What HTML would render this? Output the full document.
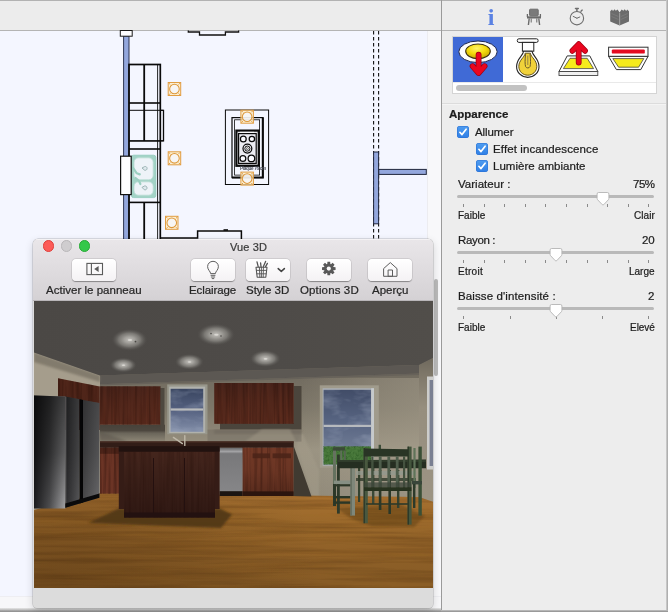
<!DOCTYPE html>
<html>
<head>
<meta charset="utf-8">
<title>Vue 3D</title>
<style>
html,body{margin:0;padding:0;}
body{width:668px;height:612px;overflow:hidden;position:relative;background:#ececec;font-family:"Liberation Sans",sans-serif;font-size:11px;color:#1a1a1a;}
.abs{position:absolute;}
#topbar{left:0;top:0;width:668px;height:30px;background:#ececec;border-top:1px solid #b2b2b2;box-sizing:border-box;}
#topline{left:0;top:30px;width:668px;height:1px;background:#b4b4b4;}
#plan{left:0;top:31px;width:427px;height:566px;background:#f4f6ff;}
#vscroll{left:427px;top:31px;width:14px;height:577px;background:#f8f8fa;border-left:1px solid #ececf0;box-sizing:border-box;}
#hscroll{left:0;top:596px;width:441px;height:12px;background:#f7f7f9;border-top:1px solid #eeeef2;box-sizing:border-box;}
#botline{left:0;top:608px;width:441px;height:4px;background:linear-gradient(#e4e4e4,#cfcfcf 30%,#a8a8a8 62%,#8a8a8a);}
#botline2{left:441px;top:609.6px;width:227px;height:2.4px;background:linear-gradient(#c4c4c4,#8c8c8c);}
#divider{left:441px;top:0;width:1px;height:610px;background:#9a9a9a;}
#panel{left:442px;top:31px;width:226px;height:581px;background:#ededed;}
#rightedge{left:666px;top:0;width:2px;height:612px;background:linear-gradient(90deg,#d2d2d2,#a4a4a4);}
.lbl{position:absolute;white-space:nowrap;line-height:12px;height:12px;will-change:transform;-webkit-font-smoothing:antialiased;-webkit-text-stroke:0.22px currentColor;}
.r{text-align:right;}
.cb{position:absolute;width:12px;height:12px;border-radius:3px;background:linear-gradient(#4f9df0,#2f7fe6);box-shadow:0 0 0 0.5px #2a6fd0 inset;}
.track{position:absolute;left:457px;width:197px;height:3px;border-radius:1.5px;background:#b9b9b9;}
.tick{position:absolute;width:1px;height:3.2px;background:#8a8a8a;}
.btn{position:absolute;top:259px;width:44px;height:22px;border-radius:4px;background:linear-gradient(#ffffff,#f4f2f4);box-shadow:0 0.5px 1px rgba(0,0,0,.35),0 0 0 0.5px rgba(0,0,0,.10);}
.tl{position:absolute;top:240.4px;width:11.6px;height:11.6px;border-radius:6px;box-sizing:border-box;}
.wl{position:absolute;white-space:nowrap;line-height:12px;height:12px;top:284px;color:#2a2a2a;font-size:11.3px;text-align:center;}
</style>
</head>
<body>
<div id="topbar" class="abs"></div>
<div id="topline" class="abs"></div>
<div id="plan" class="abs"></div>
<div id="vscroll" class="abs"></div>
<div id="hscroll" class="abs"></div>
<div id="panel" class="abs"></div>
<div id="rightedge" class="abs"></div>
<div id="divider" class="abs"></div>
<div id="botline" class="abs"></div>
<div id="botline2" class="abs"></div>

<!-- PLAN SVG -->
<svg class="abs" id="plansvg" style="left:0;top:0;will-change:transform" width="441" height="612" viewBox="0 0 441 612">
<defs>
  <g id="lt">
    <rect x="0.5" y="0.5" width="12.5" height="13" fill="#fdeec8" fill-opacity="0.75" stroke="#e19d42" stroke-width="1"/>
    <path d="M1,1 L2.6,2.6 M12.5,1 L10.9,2.6 M1,13 L2.6,11.4 M12.5,13 L10.9,11.4" stroke="#dc9434" stroke-width="0.9"/>
    <circle cx="6.75" cy="7" r="4.8" fill="#f3f6ff" fill-opacity="0.7" stroke="#de983a" stroke-width="1.05"/>
  </g>
</defs>
<!-- top shape -->
<path d="M188.3,30.5 V32 H199.5 V35 H225.4 V32 H238.6 V30.5" fill="none" stroke="#111" stroke-width="1.3"/>
<!-- left wall -->
<rect x="123.6" y="36" width="5.4" height="212" fill="#93a7dd" stroke="#2c3350" stroke-width="1"/>
<rect x="120.3" y="30.5" width="11.9" height="5.7" fill="#fdfdff" stroke="#1a1a1a" stroke-width="1"/>
<!-- cabinets -->
<g fill="none" stroke="#0a0a0a">
  <rect x="129" y="64.5" width="31.3" height="180" stroke-width="1.7"/>
  <path d="M144.2,64.5 V141 M144.2,202.5 V244" stroke-width="1.8"/>
  <path d="M157.6,64.5 V244" stroke-width="0.9"/>
  <path d="M129,103 H160" stroke-width="1.6"/>
  <path d="M129,110.3 H163.5 V140.8 H129" stroke-width="1"/>
  <path d="M160.3,110.3 H163.5 V140.8 H160.3" stroke-width="1.3"/>
  <path d="M129,141 H160" stroke-width="1.3"/>
  <path d="M129,149 H160" stroke-width="1.6"/>
  <path d="M129,202.4 H160" stroke-width="1.6"/>
  <path d="M160,238 H197.6 V231 H241.4 V244" stroke-width="1.5"/>
  <path d="M223.5,230 H228" stroke-width="1.6"/>
</g>
<!-- sink -->
<g>
  <rect x="131.4" y="155.2" width="24.4" height="42.4" rx="2.2" fill="#a3d3c6"/>
  <rect x="131.4" y="155.2" width="24.4" height="42.4" rx="2.2" fill="none" stroke="#8fc9ba" stroke-width="0.8"/>
  <rect x="134" y="157.8" width="19.2" height="22" rx="4.5" fill="#eef3f8" stroke="#b9dcd3" stroke-width="0.8"/>
  <rect x="134" y="181.8" width="19.2" height="13.4" rx="4.5" fill="#eef3f8" stroke="#b9dcd3" stroke-width="0.8"/>
  <path d="M133.2,168 l3.4,5.2 l3.2,1.2 M135.6,178 l3.2,2.6 l1.6,3.4" fill="none" stroke="#9ccfc1" stroke-width="2.2" stroke-linecap="round"/>
  <path d="M142,168 l2.6,-1.4 a1.9,1.9 0 1 1 0,3.6 Z" fill="#dfe9ee" stroke="#8aa7a6" stroke-width="0.8"/>
  <path d="M142,187.4 l2.4,-1.4 a2,2 0 1 1 0,3.8 Z" fill="#dfe9ee" stroke="#8aa7a6" stroke-width="0.8"/>
</g>
<!-- wall window -->
<rect x="120.6" y="156.2" width="10.6" height="38.4" fill="#fdfdff" stroke="#111" stroke-width="1.2"/>
<!-- lights -->
<use href="#lt" x="167.7" y="82"/>
<use href="#lt" x="167.7" y="151.3"/>
<use href="#lt" x="165" y="215.8"/>
<!-- island -->
<g fill="none" stroke="#0a0a0a">
  <rect x="225.4" y="110" width="43.2" height="74.5" stroke-width="1"/>
  <rect x="232" y="117.6" width="31" height="60" stroke-width="1.2"/>
  <path d="M262.8,117.6 V177.6 H232" stroke-width="2"/>
  <rect x="234.6" y="119.8" width="25" height="55.3" stroke-width="0.8"/>
  <rect x="236.4" y="130.6" width="22.4" height="35.2" stroke-width="2.2" fill="#e8e8ec"/>
  <rect x="238.6" y="133.6" width="17.6" height="29.8" stroke-width="1.2" fill="#ececf2"/>
  <path d="M240,132.3 H254" stroke-width="0.8" stroke="#fff"/>
</g>
<g fill="#fbfbff" stroke="#0a0a0a" stroke-width="1.25">
  <circle cx="243.3" cy="139" r="2.9"/>
  <circle cx="251.9" cy="139" r="2.7"/>
  <circle cx="247.4" cy="148.6" r="4.4"/>
  <circle cx="247.4" cy="148.6" r="2.6" fill="none" stroke-width="1"/>
  <circle cx="247.4" cy="148.6" r="1" fill="#fff" stroke-width="0.6"/>
  <circle cx="242.9" cy="158.5" r="2.9"/>
  <circle cx="251.4" cy="158.4" r="3.3"/>
</g>
<text x="240" y="169.6" font-family="Liberation Sans, sans-serif" font-size="4.6" font-weight="bold" fill="#4c505a" textLength="26">Plaque 76 cm</text>
<use href="#lt" x="240.4" y="109.7"/>
<use href="#lt" x="240.4" y="171.6"/>
<!-- right walls -->
<path d="M373.6,31 V244 M378.6,31 V244" fill="none" stroke="#111" stroke-width="1.1" stroke-dasharray="3.6 2.4"/>
<rect x="373.6" y="152" width="5" height="71.8" fill="#93a7dd" stroke="#20263c" stroke-width="1"/>
<rect x="378.8" y="169.4" width="47.5" height="5" fill="#93a7dd" stroke="#20263c" stroke-width="1"/>
</svg>
<div class="abs" style="left:434.2px;top:279px;width:4.2px;height:97px;border-radius:2.1px;background:#bababa;"></div>
<!-- tab icons -->
<div class="abs" style="left:484.2px;top:5px;width:14px;height:24px;font-family:'Liberation Serif',serif;font-weight:bold;font-size:24px;line-height:24px;color:#5b82e3;text-align:center;will-change:transform;">i</div>
<svg class="abs" style="left:524px;top:6px" width="20" height="22" viewBox="0 0 20 22">
  <g fill="none" stroke="#6a6a6a">
    <rect x="5.6" y="3.2" width="8.6" height="6.6" rx="0.8" fill="#7a7a7a" stroke-width="1"/>
    <path d="M3.4,8 V11 M16.4,8 V11" stroke-width="1.3"/>
    <path d="M3,11.4 H17" stroke-width="2.2"/>
    <path d="M5.2,12.5 L4.4,19 M14.8,12.5 L15.6,19" stroke-width="1.4"/>
    <path d="M7.2,12.5 V16.5 M12.8,12.5 V16.5" stroke-width="1"/>
  </g>
</svg>
<svg class="abs" style="left:566px;top:5px" width="22" height="22" viewBox="0 0 22 22">
  <g fill="none" stroke="#6e6e6e" stroke-linecap="round">
    <circle cx="10.9" cy="13.2" r="6.7" stroke-width="1.1"/>
    <path d="M9.5,3.6 H12.3 M10.9,3.8 V6.3" stroke-width="1.5"/>
    <path d="M15,6.2 L16.2,5.1" stroke-width="1.4"/>
    <path d="M10.9,13.2 L7.2,11.4 M10.9,13.2 L13.8,12" stroke-width="1"/>
  </g>
</svg>
<svg class="abs" style="left:608px;top:6px" width="24" height="22" viewBox="0 0 24 22">
  <path d="M2.2,5.2 L4,3.6 L5,5 L6.6,3.2 L7.8,4.8 L9.6,3.4 L11.6,6.4 L13.6,3.4 L15.4,4.8 L16.6,3.2 L18.2,5 L19.2,3.6 L21,5.2 V15.6 L11.6,19.4 L2.2,15.6 Z" fill="#6b6b6b"/>
  <path d="M11.6,7 V19" stroke="#9a9a9a" stroke-width="1.2"/>
  <path d="M3.6,7.5 L10.4,10.5 M3.6,10.5 L10.4,13.5 M19.6,7.5 L12.8,10.5 M19.6,10.5 L12.8,13.5" stroke="#7e7e7e" stroke-width="0.8"/>
</svg>
<!-- light chooser -->
<div class="abs" style="left:452px;top:36px;width:205px;height:58px;background:#fff;border:1px solid #d4d4d4;box-sizing:border-box;"></div>
<div class="abs" style="left:453px;top:37px;width:50px;height:45px;background:#406ad6;"></div>
<div class="abs" style="left:453px;top:82px;width:203px;height:1px;background:#e9e9e9;"></div>
<div class="abs" style="left:456px;top:85px;width:71px;height:6px;border-radius:3px;background:#c2c2c2;"></div>
<svg class="abs" style="left:452px;top:36px" width="205" height="48" viewBox="452 36 205 48">
  <defs>
    <radialGradient id="yg" cx="0.45" cy="0.3" r="0.8"><stop offset="0" stop-color="#fff36a"/><stop offset="0.45" stop-color="#f6dc0c"/><stop offset="1" stop-color="#b89a00"/></radialGradient>
  </defs>
  <!-- icon 1: recessed light -->
  <ellipse cx="478" cy="51.8" rx="19.2" ry="10.8" fill="#fdfdfd" stroke="#1b2550" stroke-width="1"/>
  <ellipse cx="478" cy="51.3" rx="12.3" ry="7.3" fill="url(#yg)" stroke="#3a2f10" stroke-width="1.1"/>
  <g fill="none" stroke-linecap="round" stroke-linejoin="round">
    <path d="M478.6,54.6 V71.5 M472.6,66.2 L478.6,73 L484.6,66.2" stroke="#9c0010" stroke-width="5.8"/>
    <path d="M478.6,54.6 V71.5 M472.6,66.2 L478.6,73 L484.6,66.2" stroke="#ea0620" stroke-width="4.4"/>
  </g>
  <!-- icon 2: bulb -->
  <rect x="517.3" y="38.8" width="20.8" height="3.6" rx="1.6" fill="#fff" stroke="#222" stroke-width="1"/>
  <rect x="522.4" y="42.4" width="11.4" height="8.8" fill="#fff" stroke="#222" stroke-width="1"/>
  <path d="M523.6,51.2 C523,56 516.6,58.6 516.6,66.4 C516.6,72.6 521.6,77.4 527.8,77.4 C534,77.4 539,72.6 539,66.4 C539,58.6 532.6,56 532,51.2 Z" fill="#fff" stroke="#222" stroke-width="1.1"/>
  <path d="M525.2,53.2 C524.6,57.4 518.8,60 518.8,66.4 C518.8,71.4 522.8,75.2 527.8,75.2 C532.8,75.2 536.8,71.4 536.8,66.4 C536.8,60 531,57.4 530.4,53.2 Z" fill="#f1d23a" stroke="#55440c" stroke-width="0.9"/>
  <path d="M525.6,54 C525,60 524.8,64 525.6,66.6 C526.4,68.4 529.2,68.4 530,66.6 C530.8,64 530.6,60 530,54" fill="none" stroke="#6a5a2a" stroke-width="1"/>
  <path d="M527.8,55.5 V65" stroke="#8a7a4a" stroke-width="0.9"/>
  <!-- icon 3: uplight -->
  <path d="M567.2,55.9 H589.8 L597.8,71.5 H559 Z" fill="#fff" stroke="#333" stroke-width="1" stroke-linejoin="round"/>
  <path d="M570,58.3 H587.2 L593.6,68.6 H563.4 Z" fill="#f6ea1c" stroke="#444" stroke-width="0.8" stroke-linejoin="round"/>
  <rect x="559" y="71.5" width="38.8" height="4" fill="#f0f0f0" stroke="#444" stroke-width="0.9"/>
  <g fill="none" stroke-linecap="round" stroke-linejoin="round">
    <path d="M578.7,62.6 V46 M572.4,50.8 L578.7,44.2 L585,50.8" stroke="#9c0010" stroke-width="5.8"/>
    <path d="M578.7,62.6 V46 M572.4,50.8 L578.7,44.2 L585,50.8" stroke="#ea0620" stroke-width="4.4"/>
  </g>
  <!-- icon 4: ceiling fixture -->
  <rect x="608.6" y="47.2" width="39.4" height="9.2" fill="#fff" stroke="#333" stroke-width="1"/>
  <rect x="611.8" y="49.4" width="33" height="4.2" rx="1.2" fill="#e40a20"/>
  <path d="M608.6,56.4 H648 L640.8,69.6 H616.4 Z" fill="#fff" stroke="#333" stroke-width="1" stroke-linejoin="round"/>
  <path d="M612.8,58.6 H643.8 L638.6,67.2 H618.6 Z" fill="#f6ea1c" stroke="#444" stroke-width="0.8" stroke-linejoin="round"/>
</svg>
<div class="abs" style="left:442px;top:103px;width:224px;height:1px;background:#dcdcdc;"></div>
<div class="abs" style="left:442px;top:104px;width:224px;height:1px;background:#f4f4f4;"></div>
<div class="lbl" style="left:448.8px;top:108.0px;font-size:11.5px;font-weight:bold;letter-spacing:-0.02px;color:#1c1c1c">Apparence</div>
<div class="lbl" style="left:474.6px;top:126.0px;font-size:11.5px;font-weight:normal;letter-spacing:-0.08px;color:#1c1c1c">Allumer</div>
<div class="lbl" style="left:492.6px;top:142.8px;font-size:11.5px;font-weight:normal;letter-spacing:0.11px;color:#1c1c1c">Effet incandescence</div>
<div class="lbl" style="left:492.6px;top:159.7px;font-size:11.5px;font-weight:normal;letter-spacing:0.03px;color:#1c1c1c">Lumière ambiante</div>
<div class="lbl" style="left:457.6px;top:178.0px;font-size:11.5px;font-weight:normal;letter-spacing:0.02px;color:#1c1c1c">Variateur :</div>
<div class="lbl" style="left:632.5px;top:178.0px;font-size:11.5px;font-weight:normal;letter-spacing:-0.48px;color:#1c1c1c">75%</div>
<div class="lbl" style="left:457.6px;top:209.8px;font-size:10px;font-weight:normal;letter-spacing:0.01px;color:#1c1c1c">Faible</div>
<div class="lbl" style="left:633.7px;top:209.8px;font-size:10px;font-weight:normal;letter-spacing:0.09px;color:#1c1c1c">Clair</div>
<div class="lbl" style="left:457.6px;top:234.0px;font-size:11.5px;font-weight:normal;letter-spacing:-0.35px;color:#1c1c1c">Rayon :</div>
<div class="lbl" style="left:641.9px;top:234.0px;font-size:11.5px;font-weight:normal;letter-spacing:-0.10px;color:#1c1c1c">20</div>
<div class="lbl" style="left:457.6px;top:265.8px;font-size:10px;font-weight:normal;letter-spacing:0.28px;color:#1c1c1c">Etroit</div>
<div class="lbl" style="left:629.0px;top:265.8px;font-size:10px;font-weight:normal;letter-spacing:0.00px;color:#1c1c1c">Large</div>
<div class="lbl" style="left:457.6px;top:290.0px;font-size:11.5px;font-weight:normal;letter-spacing:0.11px;color:#1c1c1c">Baisse d'intensité :</div>
<div class="lbl" style="left:648.2px;top:290.0px;font-size:11.5px;font-weight:normal;letter-spacing:-0.11px;color:#1c1c1c">2</div>
<div class="lbl" style="left:457.6px;top:321.8px;font-size:10px;font-weight:normal;letter-spacing:0.01px;color:#1c1c1c">Faible</div>
<div class="lbl" style="left:629.8px;top:321.8px;font-size:10px;font-weight:normal;letter-spacing:-0.04px;color:#1c1c1c">Elevé</div>
<div class="cb" style="left:457px;top:126px"><svg width="12" height="12" viewBox="0 0 12 12" style="position:absolute;left:0;top:0"><path d="M2.9,6.3 L5,8.6 L9.1,3.2" fill="none" stroke="#fff" stroke-width="1.7" stroke-linecap="round" stroke-linejoin="round"/></svg></div>
<div class="cb" style="left:475.5px;top:143px"><svg width="12" height="12" viewBox="0 0 12 12" style="position:absolute;left:0;top:0"><path d="M2.9,6.3 L5,8.6 L9.1,3.2" fill="none" stroke="#fff" stroke-width="1.7" stroke-linecap="round" stroke-linejoin="round"/></svg></div>
<div class="cb" style="left:475.5px;top:160px"><svg width="12" height="12" viewBox="0 0 12 12" style="position:absolute;left:0;top:0"><path d="M2.9,6.3 L5,8.6 L9.1,3.2" fill="none" stroke="#fff" stroke-width="1.7" stroke-linecap="round" stroke-linejoin="round"/></svg></div>
<div class="track" style="top:195px"></div>
<div class="tick" style="left:463.1px;top:203.6px"></div>
<div class="tick" style="left:483.7px;top:203.6px"></div>
<div class="tick" style="left:504.2px;top:203.6px"></div>
<div class="tick" style="left:524.8px;top:203.6px"></div>
<div class="tick" style="left:545.3px;top:203.6px"></div>
<div class="tick" style="left:565.9px;top:203.6px"></div>
<div class="tick" style="left:586.5px;top:203.6px"></div>
<div class="tick" style="left:607.0px;top:203.6px"></div>
<div class="tick" style="left:627.6px;top:203.6px"></div>
<div class="tick" style="left:648.1px;top:203.6px"></div>
<svg class="abs" style="left:594.5px;top:191px" width="16" height="17" viewBox="0 0 16 17"><path d="M3.6,1.5 H12.4 Q13.9,1.5 13.9,3 V7.4 Q13.9,8.2 13.3,8.8 L8.8,13.6 Q8,14.4 7.2,13.6 L2.7,8.8 Q2.1,8.2 2.1,7.4 V3 Q2.1,1.5 3.6,1.5 Z" fill="#fff" stroke="#b4b4b4" stroke-width="0.9"/></svg>
<div class="track" style="top:251px"></div>
<div class="tick" style="left:463.1px;top:259.6px"></div>
<div class="tick" style="left:483.7px;top:259.6px"></div>
<div class="tick" style="left:504.2px;top:259.6px"></div>
<div class="tick" style="left:524.8px;top:259.6px"></div>
<div class="tick" style="left:545.3px;top:259.6px"></div>
<div class="tick" style="left:565.9px;top:259.6px"></div>
<div class="tick" style="left:586.5px;top:259.6px"></div>
<div class="tick" style="left:607.0px;top:259.6px"></div>
<div class="tick" style="left:627.6px;top:259.6px"></div>
<div class="tick" style="left:648.1px;top:259.6px"></div>
<svg class="abs" style="left:548.3px;top:247px" width="16" height="17" viewBox="0 0 16 17"><path d="M3.6,1.5 H12.4 Q13.9,1.5 13.9,3 V7.4 Q13.9,8.2 13.3,8.8 L8.8,13.6 Q8,14.4 7.2,13.6 L2.7,8.8 Q2.1,8.2 2.1,7.4 V3 Q2.1,1.5 3.6,1.5 Z" fill="#fff" stroke="#b4b4b4" stroke-width="0.9"/></svg>
<div class="track" style="top:307px"></div>
<div class="tick" style="left:463.3px;top:315.6px"></div>
<div class="tick" style="left:509.6px;top:315.6px"></div>
<div class="tick" style="left:555.8px;top:315.6px"></div>
<div class="tick" style="left:602.0px;top:315.6px"></div>
<div class="tick" style="left:648.3px;top:315.6px"></div>
<svg class="abs" style="left:548.3px;top:303px" width="16" height="17" viewBox="0 0 16 17"><path d="M3.6,1.5 H12.4 Q13.9,1.5 13.9,3 V7.4 Q13.9,8.2 13.3,8.8 L8.8,13.6 Q8,14.4 7.2,13.6 L2.7,8.8 Q2.1,8.2 2.1,7.4 V3 Q2.1,1.5 3.6,1.5 Z" fill="#fff" stroke="#b4b4b4" stroke-width="0.9"/></svg>
<!-- 3D WINDOW -->
<div id="win" class="abs" style="left:33px;top:239px;width:400.4px;height:369px;border-radius:5px 5px 4px 4px;background:#dcdcdc;box-shadow:0 0 0 0.5px rgba(0,0,0,.22),0 3px 9px rgba(0,0,0,.16);overflow:hidden;">
  <div class="abs" style="left:0;top:0;width:401px;height:62px;background:linear-gradient(#e9e6e9,#d4d1d4);border-top:1px solid #f4f2f4;box-sizing:border-box;"></div>
  <div class="abs" style="left:0;top:61px;width:401px;height:1px;background:#b9b6b9;"></div>
</div>
<div class="tl" style="left:42.7px;background:#fc5b57;border:0.5px solid #df3d39;"></div>
<div class="tl" style="left:60.5px;background:#cfcdcf;border:0.5px solid #b9b7b9;"></div>
<div class="tl" style="left:78.6px;background:#34c84a;border:0.5px solid #27aa35;"></div>
<div class="lbl" style="left:229.6px;top:241.0px;font-size:11px;letter-spacing:0.12px;color:#3a3a3a">Vue 3D</div>
<div class="lbl" style="left:46.0px;top:284.2px;font-size:11.5px;letter-spacing:0.02px;color:#262626">Activer le panneau</div>
<div class="lbl" style="left:189.3px;top:283.8px;font-size:11.5px;letter-spacing:-0.09px;color:#262626">Eclairage</div>
<div class="lbl" style="left:246.2px;top:283.8px;font-size:11.5px;letter-spacing:-0.03px;color:#262626">Style 3D</div>
<div class="lbl" style="left:299.7px;top:283.8px;font-size:11.5px;letter-spacing:0.13px;color:#262626">Options 3D</div>
<div class="lbl" style="left:371.7px;top:283.8px;font-size:11.5px;letter-spacing:-0.01px;color:#262626">Aperçu</div>
<div class="btn" style="left:72px"></div>
<div class="btn" style="left:191px"></div>
<div class="btn" style="left:246.3px"></div>
<div class="btn" style="left:307px"></div>
<div class="btn" style="left:368px"></div>
<svg class="abs" style="left:72px;top:259px" width="44" height="22" viewBox="72 259 44 22">
  <rect x="86.9" y="263.4" width="15.6" height="11.2" fill="none" stroke="#5a5a5a" stroke-width="1.1"/>
  <path d="M91.4,263.4 V274.6" stroke="#5a5a5a" stroke-width="1.1"/>
  <path d="M98.6,266 V272 L94.2,269 Z" fill="#5a5a5a"/>
</svg>
<svg class="abs" style="left:191px;top:259px" width="44" height="22" viewBox="191 259 44 22">
  <path d="M210.6,273.6 C210.6,271.4 207.6,270 207.6,266.6 C207.6,263.6 210,261.3 213,261.3 C216,261.3 218.4,263.6 218.4,266.6 C218.4,270 215.4,271.4 215.4,273.6 Z" fill="none" stroke="#5e5e5e" stroke-width="1" stroke-linejoin="round"/>
  <path d="M210.6,275.3 H215.4 M210.9,277 H215.1 M211.8,278.6 H214.2" stroke="#5e5e5e" stroke-width="1"/>
</svg>
<svg class="abs" style="left:246px;top:259px" width="44" height="22" viewBox="246 259 44 22">
  <g fill="none" stroke="#555" stroke-linecap="round">
    <path d="M256,267.2 H267 L265.8,277.2 H257.2 Z" stroke-width="1.1" stroke-linejoin="round"/>
    <path d="M256.6,270.4 H266.4 M257,273.8 H266 M259.4,267.2 L259.8,277.2 M263.4,267.2 L263.2,277.2 M261.4,267.2 V277.2" stroke-width="0.9"/>
    <path d="M258.2,266.6 L257,261.8 M261,266.6 L260.6,263 M263.4,266.6 L265.6,261.4 M265.6,266.6 L267.4,263.4" stroke-width="1.3"/>
    <path d="M278.2,268.6 L281.3,271.4 L284.4,268.6" stroke-width="1.5" stroke="#444" stroke-linejoin="round"/>
  </g>
</svg>
<svg class="abs" style="left:307px;top:259px" width="44" height="22" viewBox="307 259 44 22">
  <path d="M335.56,267.23 L335.56,269.97 L333.45,270.14 L333.18,270.80 L334.55,272.41 L332.61,274.35 L331.00,272.98 L330.34,273.25 L330.17,275.36 L327.43,275.36 L327.26,273.25 L326.60,272.98 L324.99,274.35 L323.05,272.41 L324.42,270.80 L324.15,270.14 L322.04,269.97 L322.04,267.23 L324.15,267.06 L324.42,266.40 L323.05,264.79 L324.99,262.85 L326.60,264.22 L327.26,263.95 L327.43,261.84 L330.17,261.84 L330.34,263.95 L331.00,264.22 L332.61,262.85 L334.55,264.79 L333.18,266.40 L333.45,267.06 Z" fill="#585858"/>
  <circle cx="328.8" cy="268.6" r="2.1" fill="#f8f7f8"/>
</svg>
<svg class="abs" style="left:368px;top:259px" width="44" height="22" viewBox="368 259 44 22">
  <g fill="none" stroke="#5c5c5c" stroke-linejoin="round">
    <path d="M383.6,268.6 L390.3,262.6 L397,268.6 V276.3 H383.6 Z" stroke-width="1"/>
    <rect x="388.1" y="270" width="4.4" height="6.3" stroke-width="1"/>
  </g>
</svg>
<!-- 3D SCENE -->
<svg class="abs" id="scene" style="left:34px;top:301px" width="398.8" height="287" viewBox="34 301 398.8 287" preserveAspectRatio="none">
<defs>
  <linearGradient id="gceil" x1="0" y1="0" x2="1" y2="0"><stop offset="0" stop-color="#4b4845"/><stop offset="0.6" stop-color="#4e4b48"/><stop offset="1" stop-color="#514e4a"/></linearGradient>
  <linearGradient id="gback" gradientUnits="userSpaceOnUse" x1="0" y1="378" x2="0" y2="497"><stop offset="0" stop-color="#726c60"/><stop offset="0.25" stop-color="#7d7769"/><stop offset="0.45" stop-color="#8d8676"/><stop offset="0.6" stop-color="#9a9382"/><stop offset="1" stop-color="#8f8878"/></linearGradient>
  <linearGradient id="gfloor" gradientUnits="userSpaceOnUse" x1="0" y1="492" x2="0" y2="588"><stop offset="0" stop-color="#a97232"/><stop offset="0.3" stop-color="#9b692b"/><stop offset="0.6" stop-color="#906128"/><stop offset="1" stop-color="#855a25"/></linearGradient>
  <linearGradient id="gfside" gradientUnits="userSpaceOnUse" x1="34" y1="0" x2="65" y2="0"><stop offset="0" stop-color="#1c1c1e"/><stop offset="0.5" stop-color="#4e4e50"/><stop offset="1" stop-color="#a2a2a4"/></linearGradient>
  <linearGradient id="gfd1" gradientUnits="userSpaceOnUse" x1="65" y1="0" x2="80" y2="0"><stop offset="0" stop-color="#2a2a2c"/><stop offset="1" stop-color="#5a5a5c"/></linearGradient>
  <linearGradient id="gfd2" gradientUnits="userSpaceOnUse" x1="83" y1="0" x2="99.5" y2="0"><stop offset="0" stop-color="#4a4a4c"/><stop offset="1" stop-color="#6c6c6e"/></linearGradient>
  <linearGradient id="gfv" gradientUnits="userSpaceOnUse" x1="0" y1="396" x2="0" y2="510"><stop offset="0" stop-color="#000" stop-opacity="0.62"/><stop offset="0.5" stop-color="#000" stop-opacity="0.42"/><stop offset="0.8" stop-color="#000" stop-opacity="0.18"/><stop offset="1" stop-color="#000" stop-opacity="0"/></linearGradient>
  <linearGradient id="gsky" gradientUnits="userSpaceOnUse" x1="0" y1="388" x2="0" y2="446"><stop offset="0" stop-color="#404b66"/><stop offset="0.55" stop-color="#566380"/><stop offset="1" stop-color="#6c7892"/></linearGradient>
  <linearGradient id="gsky2" gradientUnits="userSpaceOnUse" x1="0" y1="388" x2="0" y2="432"><stop offset="0" stop-color="#38445f"/><stop offset="0.5" stop-color="#556180"/><stop offset="1" stop-color="#838fa9"/></linearGradient>
  <linearGradient id="gdw" gradientUnits="userSpaceOnUse" x1="0" y1="448" x2="0" y2="492"><stop offset="0" stop-color="#6a6a6c"/><stop offset="0.08" stop-color="#a2a2a4"/><stop offset="0.13" stop-color="#78787a"/><stop offset="1" stop-color="#868688"/></linearGradient>
  <radialGradient id="glight"><stop offset="0" stop-color="#c2c0bb" stop-opacity="1"/><stop offset="0.3" stop-color="#a5a39e" stop-opacity="0.95"/><stop offset="0.6" stop-color="#8a8883" stop-opacity="0.75"/><stop offset="0.82" stop-color="#6a6864" stop-opacity="0.4"/><stop offset="1" stop-color="#504e4a" stop-opacity="0"/></radialGradient>
  <linearGradient id="gsoff" gradientUnits="userSpaceOnUse" x1="0" y1="366" x2="0" y2="388"><stop offset="0" stop-color="#514e4a"/><stop offset="0.5" stop-color="#57534e"/><stop offset="0.75" stop-color="#635e54"/><stop offset="1" stop-color="#6b655a"/></linearGradient>
  <linearGradient id="gcabU" gradientUnits="userSpaceOnUse" x1="0" y1="383" x2="0" y2="425"><stop offset="0" stop-color="#48231a"/><stop offset="0.5" stop-color="#52271b"/><stop offset="1" stop-color="#582a1d"/></linearGradient>
  <linearGradient id="gwr" gradientUnits="userSpaceOnUse" x1="300" y1="0" x2="419" y2="0"><stop offset="0" stop-color="#a8a08e" stop-opacity="0"/><stop offset="0.6" stop-color="#a8a08e" stop-opacity="0.35"/><stop offset="1" stop-color="#a8a08e" stop-opacity="0.5"/></linearGradient>
  <linearGradient id="grw" gradientUnits="userSpaceOnUse" x1="0" y1="358" x2="0" y2="500"><stop offset="0" stop-color="#6f695d"/><stop offset="0.12" stop-color="#7f786a"/><stop offset="0.35" stop-color="#968e7e"/><stop offset="1" stop-color="#9c9484"/></linearGradient>
  <linearGradient id="gunder" gradientUnits="userSpaceOnUse" x1="0" y1="424.7" x2="0" y2="441.5"><stop offset="0" stop-color="#47423a"/><stop offset="0.35" stop-color="#4d473f"/><stop offset="0.5" stop-color="#6a655a"/><stop offset="1" stop-color="#8d8676"/></linearGradient>
  <radialGradient id="gvig" gradientUnits="userSpaceOnUse" cx="60" cy="600" r="260"><stop offset="0" stop-color="#2a1604" stop-opacity="0.3"/><stop offset="0.6" stop-color="#2a1604" stop-opacity="0.12"/><stop offset="1" stop-color="#2a1604" stop-opacity="0"/></radialGradient>
  <linearGradient id="gbase" gradientUnits="userSpaceOnUse" x1="0" y1="448" x2="0" y2="496"><stop offset="0" stop-color="#2a120b" stop-opacity="0.05"/><stop offset="0.5" stop-color="#2a120b" stop-opacity="0.15"/><stop offset="1" stop-color="#2a120b" stop-opacity="0.4"/></linearGradient>
  <linearGradient id="gisl" gradientUnits="userSpaceOnUse" x1="0" y1="450" x2="0" y2="518"><stop offset="0" stop-color="#45261d"/><stop offset="0.4" stop-color="#3b2019"/><stop offset="1" stop-color="#2f1813"/></linearGradient>
  <filter id="fwood" x="0" y="0" width="100%" height="100%" color-interpolation-filters="sRGB">
    <feTurbulence type="fractalNoise" baseFrequency="0.008 0.22" numOctaves="3" seed="7"/>
    <feColorMatrix type="matrix" values="0 0 0 0 0.26  0 0 0 0 0.15  0 0 0 0 0.05  1.6 0 0 0 -0.62"/>
  </filter>
  <filter id="fwood2" x="0" y="0" width="100%" height="100%" color-interpolation-filters="sRGB">
    <feTurbulence type="fractalNoise" baseFrequency="0.006 0.12" numOctaves="2" seed="11"/>
    <feColorMatrix type="matrix" values="0 0 0 0 0.78  0 0 0 0 0.52  0 0 0 0 0.18  1.5 0 0 0 -0.68"/>
  </filter>
  <filter id="fgrain" x="0" y="0" width="100%" height="100%" color-interpolation-filters="sRGB">
    <feTurbulence type="fractalNoise" baseFrequency="0.35 0.012" numOctaves="3" seed="5"/>
    <feColorMatrix type="matrix" values="0 0 0 0 0.12  0 0 0 0 0.04  0 0 0 0 0.02  1.8 0 0 0 -0.7"/>
  </filter>
  <filter id="fgrainL" x="0" y="0" width="100%" height="100%" color-interpolation-filters="sRGB">
    <feTurbulence type="fractalNoise" baseFrequency="0.3 0.01" numOctaves="2" seed="9"/>
    <feColorMatrix type="matrix" values="0 0 0 0 0.62  0 0 0 0 0.28  0 0 0 0 0.16  1.6 0 0 0 -0.72"/>
  </filter>
  <filter id="fcloud" x="0" y="0" width="100%" height="100%" color-interpolation-filters="sRGB">
    <feTurbulence type="fractalNoise" baseFrequency="0.05 0.11" numOctaves="3" seed="4"/>
    <feColorMatrix type="matrix" values="0 0 0 0 0.66  0 0 0 0 0.70  0 0 0 0 0.78  1.7 0 0 0 -0.72"/>
  </filter>
  <filter id="fgrass" x="0" y="0" width="100%" height="100%" color-interpolation-filters="sRGB">
    <feTurbulence type="fractalNoise" baseFrequency="0.5 0.4" numOctaves="2" seed="2"/>
    <feColorMatrix type="matrix" values="0 0 0 0 0.12  0 0 0 0 0.3  0 0 0 0 0.1  2 0 0 0 -0.8"/>
  </filter>
  <filter id="blur1"><feGaussianBlur stdDeviation="1.2"/></filter>
  <filter id="blur2"><feGaussianBlur stdDeviation="2.2"/></filter>
  <clipPath id="cfloor"><path d="M34,510 L100,493 L419,497 L434,502 V588 H34 Z"/></clipPath>
  <clipPath id="clcab"><path d="M58,378.3 L99.7,386.4 V430 H58 Z"/></clipPath>
  <clipPath id="cscene"><rect x="34" y="301" width="399.6" height="287"/></clipPath>
</defs>
<g clip-path="url(#cscene)">
<!-- base -->
<rect x="34" y="301" width="400" height="287" fill="#8c8474"/>
<!-- back wall -->
<path d="M100,375.5 L419,365 L419,500 L100,495 Z" fill="url(#gback)"/>
<path d="M100,375.5 L419,365 L419,373.6 L100,384.2 Z" fill="#5c5853"/>
<path d="M100,384.2 L419,373.6 L419,375 L100,385.6 Z" fill="#67625a"/>
<!-- light wash on wall right of cabinets -->
<path d="M302,432 L319,470 L319,497 L312,497 L296,445 Z" fill="#a39b89" opacity="0.6" filter="url(#blur1)"/>
<rect x="300" y="378" width="119" height="120" fill="url(#gwr)"/>
<!-- right wall -->
<path d="M419,365 L434,357.5 L434,505 L419,499 Z" fill="url(#grw)"/>
<rect x="427" y="376.5" width="7" height="93" fill="#cdcdcb"/>
<rect x="429.6" y="380" width="4.4" height="86" fill="#7a7f92"/>
<!-- left wall -->
<path d="M34,352.5 L100,375.5 L100,500 L34,515 Z" fill="#a59d8c"/>
<path d="M34,352.5 L100,375.5 L100,382 L34,362 Z" fill="#7d7668" opacity="0.85" filter="url(#blur1)"/>
<!-- ceiling -->
<path d="M34,301 H434 V357.5 L419,365 L100,375.5 L34,352.5 Z" fill="url(#gceil)"/>
<!-- ceiling lights -->
<g>
  <ellipse cx="129.5" cy="339.8" rx="18" ry="11" fill="url(#glight)"/>
  <ellipse cx="216" cy="334.6" rx="19" ry="11" fill="url(#glight)"/>
  <ellipse cx="123.3" cy="365" rx="13.5" ry="7.5" fill="url(#glight)"/>
  <ellipse cx="189.3" cy="361.8" rx="14.5" ry="8" fill="url(#glight)"/>
  <ellipse cx="265.3" cy="358.6" rx="15.5" ry="8.5" fill="url(#glight)"/>
  <g fill="#dedcd7" opacity="0.85"><ellipse cx="130" cy="340" rx="2.2" ry="1"/><ellipse cx="216.4" cy="334.8" rx="2.2" ry="1"/><ellipse cx="123.6" cy="365.2" rx="1.7" ry="0.8"/><ellipse cx="189.6" cy="362" rx="1.8" ry="0.8"/><ellipse cx="265.6" cy="358.8" rx="1.9" ry="0.9"/></g>
  <g fill="#4a4844"><circle cx="135.5" cy="341.6" r="0.9"/><circle cx="211" cy="333.6" r="0.8"/><circle cx="221" cy="336" r="0.8"/></g>
</g>
<!-- floor -->
<path d="M34,510 L100,493 L419,497 L434,502 V588 H34 Z" fill="url(#gfloor)"/>
<g clip-path="url(#cfloor)">
  <rect x="34" y="490" width="399" height="98" filter="url(#fwood)" opacity="0.38"/>
  <rect x="34" y="490" width="399" height="98" filter="url(#fwood2)" opacity="0.18"/>
</g>
<g clip-path="url(#cfloor)"><rect x="34" y="490" width="400" height="98" fill="url(#gvig)"/></g>
<!-- left window -->
<rect x="167.2" y="384.4" width="40.3" height="49.8" fill="#98978b"/>
<rect x="169.2" y="386.6" width="36" height="46.4" fill="#b0b1ac"/>
<rect x="170.6" y="388.8" width="32.6" height="43" fill="url(#gsky2)"/>
<rect x="170.6" y="388.8" width="32.6" height="43" filter="url(#fcloud)" opacity="0.55"/>
<rect x="170.6" y="408.4" width="32.6" height="2.2" fill="#b9bbbc"/>
<!-- right window -->
<rect x="319.8" y="385.3" width="59" height="82.4" fill="#a09b8c"/>
<rect x="322.6" y="388.2" width="51.4" height="77.6" fill="#abafb2"/>
<rect x="371.2" y="388.2" width="2.8" height="77.6" fill="#c6cacc"/>
<rect x="323.6" y="389.8" width="47.4" height="74.6" fill="url(#gsky)"/>
<rect x="323.6" y="389.8" width="47.4" height="57" filter="url(#fcloud)" opacity="0.5"/>
<rect x="323.6" y="446.4" width="47.4" height="18" fill="#4a7a3c"/>
<rect x="323.6" y="446.4" width="47.4" height="18" filter="url(#fgrass)" opacity="0.6"/>
<rect x="323.6" y="424.8" width="47.4" height="2.2" fill="#b7babe"/>
<!-- upper cabinet shadows -->
<path d="M100,424.7 H165 V441.5 H100 Z" fill="url(#gunder)"/>
<path d="M100,431 L100,441.5 L128,441.5 Z" fill="#5e594f" opacity="0.6" filter="url(#blur1)"/>
<path d="M160.3,388 H164.5 V430 H160.3 Z" fill="#4e483f"/>
<path d="M220,423 H301.5 V386 H293.7 V423 Z M220,423 H301.5 V429.6 H220 Z" fill="#4b453c"/>
<path d="M214,429.6 H301.5 V434 H214 Z" fill="#5a5349" opacity="0.35" filter="url(#blur1)"/>
<!-- upper cabinets -->
<path d="M58,378.3 L99.7,386.4 V430 H58 Z" fill="#4f2519"/>
<g clip-path="url(#clcab)"><rect x="58" y="378" width="42" height="52" filter="url(#fgrain)" opacity="0.45"/></g>
<rect x="99.7" y="386.3" width="60.6" height="38.4" fill="url(#gcabU)"/>
<rect x="99.7" y="386.3" width="60.6" height="38.4" filter="url(#fgrain)" opacity="0.45"/>
<rect x="99.7" y="386.3" width="60.6" height="38.4" filter="url(#fgrainL)" opacity="0.14"/>
<rect x="214.2" y="383" width="79.5" height="40.8" fill="url(#gcabU)"/>
<rect x="214.2" y="383" width="79.5" height="40.8" filter="url(#fgrain)" opacity="0.45"/>
<rect x="214.2" y="383" width="79.5" height="40.8" filter="url(#fgrainL)" opacity="0.16"/>
<!-- backsplash lit -->

<rect x="207.5" y="429.6" width="94" height="12" fill="#6f695f" opacity="0.45"/>
<path d="M245,441.6 L262,429.6 L290,429.6 L296,441.6 Z" fill="#a09886" opacity="0.5" filter="url(#blur1)"/>
<!-- countertop / base -->
<rect x="100" y="441.4" width="193.7" height="6.4" fill="#321d17"/>
<rect x="100" y="441.4" width="193.7" height="1.2" fill="#4a2e24"/>
<rect x="100" y="447.8" width="20" height="45.8" fill="#6b3425"/>
<rect x="100" y="447.8" width="20" height="6" fill="#2a120b" opacity="0.45"/>
<rect x="100" y="447.8" width="20" height="45.8" filter="url(#fgrain)" opacity="0.5"/>
<rect x="219.5" y="447.8" width="23.2" height="43.6" fill="url(#gdw)"/>
<rect x="219.5" y="491.2" width="23.2" height="4.8" fill="#1b1512"/>
<rect x="242.7" y="447.8" width="51" height="47.8" fill="#753b28"/>
<rect x="242.7" y="447.8" width="51" height="47.8" filter="url(#fgrain)" opacity="0.45"/>
<rect x="242.7" y="447.8" width="51" height="47.8" filter="url(#fgrainL)" opacity="0.15"/>
<rect x="242.7" y="447.8" width="51" height="47.8" fill="url(#gbase)"/>
<rect x="242.7" y="491.4" width="51" height="4.6" fill="#2c150e"/>
<rect x="252.6" y="453.4" width="17.4" height="4.8" fill="#4a2317" opacity="0.85"/>
<rect x="272.6" y="453.4" width="18.4" height="4.8" fill="#4a2317" opacity="0.85"/>
<path d="M293.7,446 V496 L311.5,496.4 Z" fill="#403a31"/>
<!-- island shadow -->
<path d="M88,523 L119,508.6 H220 L232,514.5 L221,528 Z" fill="#513716" filter="url(#blur1)" opacity="0.92"/>
<!-- island -->
<rect x="118.8" y="447.6" width="100.8" height="61.4" fill="#351c16"/>
<rect x="124" y="452" width="91" height="65.5" fill="url(#gisl)"/>
<rect x="124" y="452" width="91" height="65.5" filter="url(#fgrain)" opacity="0.35"/>
<rect x="118.8" y="446.2" width="100.8" height="5.4" fill="#21120f"/>
<path d="M153.5,458 V514 M184.5,458 V514" stroke="#241110" stroke-width="1"/>
<rect x="124" y="512.5" width="91" height="5" fill="#231110"/>
<!-- faucet -->
<path d="M173.4,437.4 L182.4,443.6 M184.8,435.6 V445.4" stroke="#beb7a8" stroke-width="1.4" fill="none" stroke-linecap="round"/>
<!-- fridge -->
<path d="M34,395.6 L65.3,396.5 V508.6 H34 Z" fill="url(#gfside)"/>
<path d="M34,395.6 L65.3,396.5 V508.6 H34 Z" fill="url(#gfv)"/>
<path d="M65.3,396.5 L79.5,399.2 V503.6 L65.3,507.8 Z" fill="url(#gfd1)"/>
<path d="M83,399.9 L99.4,402.9 V497.6 L83,502.6 Z" fill="url(#gfd2)"/>
<path d="M65.3,396.5 L99.4,402.9 V497.6 L65.3,507.8 Z" fill="url(#gfv)" opacity="0.55"/>
<path d="M65.3,396.5 L66.3,396.7 V507.5 L65.3,507.8 Z" fill="#77777a" opacity="0.7"/>
<path d="M79.5,399.2 L83,399.9 V502.6 L79.5,503.6 Z" fill="#050506"/>
<path d="M65.3,503.4 L99.4,493.4 V497.8 L65.3,507.8 Z" fill="#0a0a0b"/>
<!-- TABLE AND CHAIRS -->
<g>
  <!-- chair shadows on floor -->
  <path d="M336,508 L352,519 L372,526 L414,527 L425,516 L400,504 Z" fill="#4f3511" opacity="0.4" filter="url(#blur1)"/>
  <!-- far legs -->
  <rect x="378.8" y="470" width="2.6" height="40" fill="#2b3828"/>
  <rect x="388.4" y="470" width="2.6" height="44" fill="#2b3828"/>
  <rect x="397" y="470" width="2.4" height="38" fill="#33412f"/>
  <rect x="372" y="468" width="2.4" height="36" fill="#3a4836"/>
  <rect x="358" y="468" width="2.2" height="34" fill="#34422f"/>
  <!-- far chairs' light parts seen between spindles -->
  <rect x="356" y="471" width="60" height="4" fill="#939a8f" opacity="0.75"/>
  <rect x="356" y="478" width="60" height="3" fill="#2f3a2b" opacity="0.8"/>
  <!-- left chair -->
  <rect x="333" y="447.4" width="3" height="40" fill="#65725f"/>
  <rect x="333" y="484" width="3" height="22" fill="#2c3828"/>
  <rect x="337" y="454.6" width="2.8" height="59" fill="#2e3a2a"/>
  <rect x="333" y="447.2" width="12" height="3.4" fill="#3b4a37"/>
  <rect x="340.4" y="450.6" width="1.8" height="10" fill="#5f6e5a"/><rect x="344" y="450.6" width="1.8" height="10" fill="#566552"/>
  <rect x="334" y="480.6" width="17" height="3.6" fill="#868f83"/>
  <rect x="334" y="484.2" width="17" height="2.2" fill="#2d3829"/>
  <rect x="334" y="496" width="17" height="2.4" fill="#2a3626"/>
  <rect x="334" y="501.4" width="17" height="2.4" fill="#2a3626"/>
  <!-- table leg -->
  <rect x="350.4" y="468" width="4.6" height="47.6" fill="#7f877a"/>
  <rect x="350.4" y="468" width="1.4" height="47.6" fill="#626b5d"/>
  <!-- table top band -->
  <path d="M338,460.2 L426,459.6 V468.2 H338 Z" fill="#252e21"/>
  <rect x="338" y="460.2" width="88" height="1.6" fill="#34402f"/>
  <!-- chair behind table (tops visible) -->
  <rect x="378.6" y="444.8" width="2.4" height="5" fill="#3c4c38"/>
  <!-- right chair -->
  <rect x="418.4" y="446.6" width="3.4" height="69" fill="#3a4f36"/>
  <rect x="413.4" y="448" width="2.2" height="40" fill="#5f7459"/>
  <rect x="412" y="481" width="10" height="3.4" fill="#39463a"/>
  <rect x="413" y="484" width="2.4" height="24" fill="#2c3a2a"/>
  <!-- front chair -->
  <rect x="363.6" y="448" width="4.2" height="75.2" fill="#49583f"/>
  <rect x="363.6" y="448" width="1.4" height="75.2" fill="#2f3b2b"/>
  <rect x="407.6" y="446.6" width="4" height="78" fill="#44553d"/>
  <rect x="407.6" y="446.6" width="1.3" height="78" fill="#2b3727"/>
  <path d="M364,448.6 L408,449.2 V456.4 L364,456.6 Z" fill="#293525"/>
  <rect x="378.8" y="456.4" width="2.8" height="32" fill="#4f5e4c"/>
  <rect x="387.4" y="456.4" width="2.8" height="32" fill="#4f5e4c"/>
  <rect x="395.8" y="456.4" width="2.8" height="32" fill="#4f5e4c"/>
  <rect x="371.2" y="456.4" width="2.4" height="32" fill="#44523f"/>
  <rect x="403" y="456.4" width="2.2" height="32" fill="#44523f"/>
  <rect x="364" y="487.2" width="47.4" height="3.8" fill="#27321f"/>
  <rect x="364" y="482.4" width="47" height="4.8" fill="#3c463a" opacity="0.75"/>
  <rect x="366" y="503" width="42" height="2" fill="#2c3828" opacity="0.8"/>
</g>
</g>
</svg>
</body>
</html>
